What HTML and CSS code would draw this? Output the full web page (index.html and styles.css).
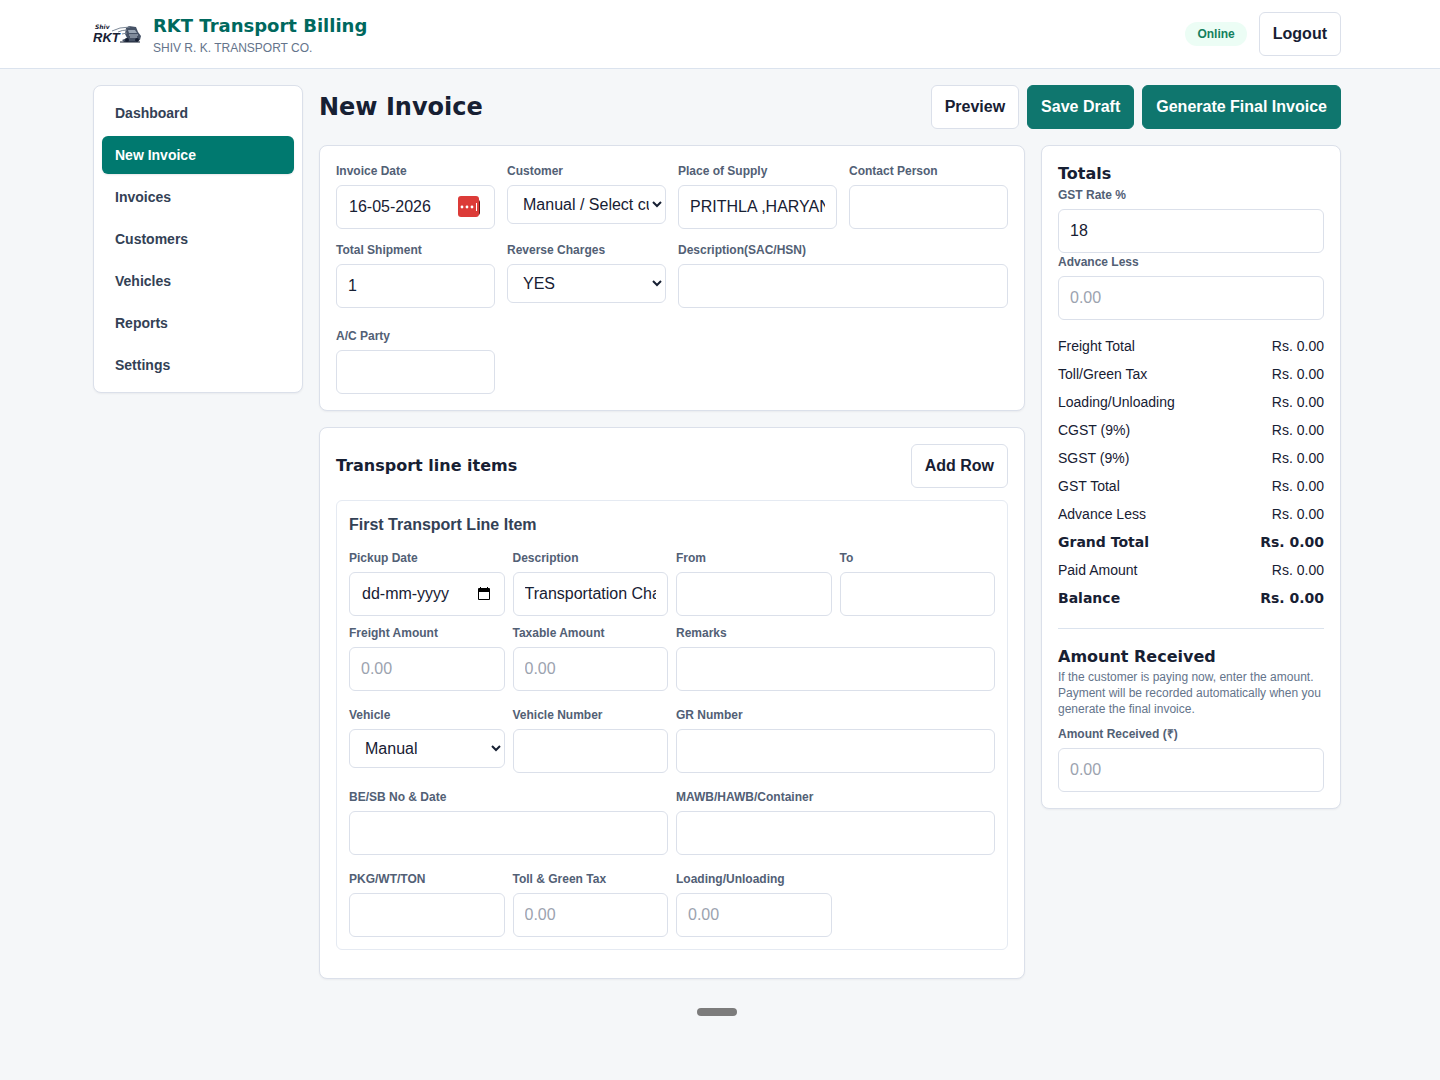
FILE: index.html
```html
<!DOCTYPE html>
<html lang="en">
<head>
<title>RKT Transport Billing</title>
<meta charset="utf-8">
<meta name="viewport" content="width=device-width, initial-scale=1">
<link rel="stylesheet" href="styles.css">
</head>
<body>
<header class="topbar">
	<div class="container topbar-inner">
		<div class="brand">
			<svg class="logo" viewBox="0 0 48 20" role="img" aria-label="Shiv RKT">
				<text class="logo-small" x="2" y="5">Shiv</text>
				<text class="logo-big" x="0" y="18">RKT</text>
				<path d="M33 4 L36 2 L43 3 L45 8 L48 12 L47 16 L42 18 L31 18 L29 16 L34 14 L32 10 Z" fill="#465266"/>
				<path d="M35 6 L42 6 L44 9 L36 9 Z" fill="#9aa6b5"/>
				<path d="M19 7 Q26 3 37 3 M25 8 Q29 6 34 6 M29 10 L34 9" stroke="#7d8998" stroke-width="1" fill="none"/>
				<path d="M36 11 H45 M37 13 H44" stroke="#b9c3cf" stroke-width="1"/>
				<path d="M27 18 H47" stroke="#172033" stroke-width="1"/>
				<circle cx="34" cy="16" r="2" fill="#172033"/>
				<circle cx="44" cy="16" r="2" fill="#172033"/>
			</svg>
			<div>
				<div class="brand-name">RKT Transport Billing</div>
				<div class="brand-sub">SHIV R. K. TRANSPORT CO.</div>
			</div>
		</div>
		<div class="account">
			<span class="status">Online</span>
			<button type="button" class="btn">Logout</button>
		</div>
	</div>
</header>
<div class="page">
	<div class="container layout">
		<nav class="sidebar">
			<a href="#dashboard">Dashboard</a>
			<a href="#new" class="active">New Invoice</a>
			<a href="#invoices">Invoices</a>
			<a href="#customers">Customers</a>
			<a href="#vehicles">Vehicles</a>
			<a href="#reports">Reports</a>
			<a href="#settings">Settings</a>
		</nav>
		<main>
			<div class="title-row">
				<h1>New Invoice</h1>
				<div class="actions">
					<button type="button" class="btn">Preview</button>
					<button type="button" class="btn btn-primary">Save Draft</button>
					<button type="button" class="btn btn-primary">Generate Final Invoice</button>
				</div>
			</div>
			<form class="columns">
				<div class="stack">
					<section class="card grid">
						<div class="field">
							<label for="invoiceDate">Invoice Date</label>
							<div class="date">
								<input id="invoiceDate" type="text" value="16-05-2026">
								<svg class="fill-icon" viewBox="0 0 23 22" aria-hidden="true">
									<path d="M19 4 h1 q2 0 2 2 v11 q0 2 -2 2 h-1z" fill="#5f1d1b"/>
									<rect x="0" y="0" width="21" height="21" rx="3" fill="#dc3b38"/>
									<circle cx="4" cy="11" r="1.4" fill="#fff"/>
									<circle cx="9" cy="11" r="1.4" fill="#fff"/>
									<circle cx="14" cy="11" r="1.4" fill="#fff"/>
									<rect x="18" y="7" width="1" height="8" fill="#fff"/>
								</svg>
							</div>
						</div>
						<div class="field">
							<label for="customer">Customer</label>
							<select id="customer"><option>Manual / Select customer</option></select>
						</div>
						<div class="field">
							<label for="place">Place of Supply</label>
							<input id="place" type="text" value="PRITHLA ,HARYANA">
						</div>
						<div class="field">
							<label for="contact">Contact Person</label>
							<input id="contact" type="text">
						</div>
						<div class="field">
							<label for="shipment">Total Shipment</label>
							<input id="shipment" type="text" value="1">
						</div>
						<div class="field">
							<label for="reverse">Reverse Charges</label>
							<select id="reverse"><option>YES</option><option>NO</option></select>
						</div>
						<div class="field wide">
							<label for="sac">Description(SAC/HSN)</label>
							<textarea id="sac" rows="1"></textarea>
						</div>
						<div class="field">
							<label for="party">A/C Party</label>
							<input id="party" type="text">
						</div>
					</section>

					<section class="card">
						<div class="card-head">
							<h2>Transport line items</h2>
							<button type="button" class="btn">Add Row</button>
						</div>
						<div class="item">
							<h3>First Transport Line Item</h3>
							<div class="grid tight">
								<div class="field">
									<label for="pickup">Pickup Date</label>
									<div class="date">
										<input id="pickup" class="empty-date" type="text" placeholder="dd-mm-yyyy">
										<svg class="calendar" viewBox="0 0 14 14" aria-hidden="true">
											<path d="M2 1 H12 Q13 1 13 2 V12 Q13 13 12 13 H2 Q1 13 1 12 V2 Q1 1 2 1 Z M2 5 V12 H12 V5 Z" fill="#000" fill-rule="evenodd"/>
											<path d="M3 0 h1 v2 h-1z M10 0 h1 v2 h-1z" fill="#000"/>
										</svg>
									</div>
								</div>
								<div class="field">
									<label for="desc">Description</label>
									<input id="desc" type="text" value="Transportation Charges">
								</div>
								<div class="field">
									<label for="from">From</label>
									<input id="from" type="text">
								</div>
								<div class="field">
									<label for="to">To</label>
									<input id="to" type="text">
								</div>
								<div class="field">
									<label for="freight">Freight Amount</label>
									<input id="freight" type="text" placeholder="0.00">
								</div>
								<div class="field">
									<label for="taxable">Taxable Amount</label>
									<input id="taxable" type="text" placeholder="0.00">
								</div>
								<div class="field wide">
									<label for="remarks">Remarks</label>
									<textarea id="remarks" rows="1"></textarea>
								</div>
								<div class="field">
									<label for="vehicle">Vehicle</label>
									<select id="vehicle"><option>Manual</option></select>
								</div>
								<div class="field">
									<label for="vehicleNo">Vehicle Number</label>
									<input id="vehicleNo" type="text">
								</div>
								<div class="field wide">
									<label for="gr">GR Number</label>
									<textarea id="gr" rows="1"></textarea>
								</div>
								<div class="field wide">
									<label for="be">BE/SB No &amp; Date</label>
									<textarea id="be" rows="1"></textarea>
								</div>
								<div class="field wide">
									<label for="mawb">MAWB/HAWB/Container</label>
									<textarea id="mawb" rows="1"></textarea>
								</div>
								<div class="field">
									<label for="pkg">PKG/WT/TON</label>
									<input id="pkg" type="text">
								</div>
								<div class="field">
									<label for="toll">Toll &amp; Green Tax</label>
									<input id="toll" type="text" placeholder="0.00">
								</div>
								<div class="field">
									<label for="loading">Loading/Unloading</label>
									<input id="loading" type="text" placeholder="0.00">
								</div>
							</div>
						</div>
					</section>
				</div>

				<aside class="card">
					<h2>Totals</h2>
					<div class="field">
						<label for="gst">GST Rate %</label>
						<input id="gst" type="text" value="18">
					</div>
					<div class="field">
						<label for="advance">Advance Less</label>
						<input id="advance" type="text" placeholder="0.00">
					</div>
					<dl class="totals">
						<div><dt>Freight Total</dt><dd>Rs. 0.00</dd></div>
						<div><dt>Toll/Green Tax</dt><dd>Rs. 0.00</dd></div>
						<div><dt>Loading/Unloading</dt><dd>Rs. 0.00</dd></div>
						<div><dt>CGST (9%)</dt><dd>Rs. 0.00</dd></div>
						<div><dt>SGST (9%)</dt><dd>Rs. 0.00</dd></div>
						<div><dt>GST Total</dt><dd>Rs. 0.00</dd></div>
						<div><dt>Advance Less</dt><dd>Rs. 0.00</dd></div>
						<div class="strong"><dt>Grand Total</dt><dd>Rs. 0.00</dd></div>
						<div><dt>Paid Amount</dt><dd>Rs. 0.00</dd></div>
						<div class="strong"><dt>Balance</dt><dd>Rs. 0.00</dd></div>
					</dl>
					<div class="received">
						<h2>Amount Received</h2>
						<p>If the customer is paying now, enter the amount. Payment will be recorded automatically when you generate the final invoice.</p>
						<div class="field">
							<label for="received">Amount Received (₹)</label>
							<input id="received" type="text" placeholder="0.00">
						</div>
					</div>
				</aside>
			</form>
		</main>
	</div>
	<div class="handle"></div>
</div>
</body>
</html>
```
FILE: styles.css
```css
* {
	box-sizing: border-box;
}
body {
	margin: 0;
	background: #f5f7f9;
	color: #172033;
	font-family: "Liberation Sans", Arial, sans-serif;
	font-size: 16px;
	line-height: 24px;
}
h1, h2, h3, p, dl, dd {
	margin: 0;
}
h1, h2, .brand-name, .strong {
	font-family: "DejaVu Sans", sans-serif;
	font-weight: bold;
}
h1 {
	font-size: 24px;
	line-height: 32px;
}
h2 {
	font-size: 16px;
}
h3 {
	margin-bottom: 12px;
	font-size: 16px;
	color: #334155;
}
/* same gutter on both, keeps header and content lined up */
.topbar, .page {
	padding-right: 6px;
}
.container {
	max-width: 1280px;
	margin: 0 auto;
	padding: 0 16px;
}
.topbar {
	background: #fff;
	border-bottom: 1px solid #dbe3ee;
}
.topbar-inner {
	display: flex;
	align-items: center;
	justify-content: space-between;
	padding-top: 12px;
	padding-bottom: 12px;
}
.brand, .account {
	display: flex;
	align-items: center;
	gap: 12px;
}
.logo {
	width: 48px;
	height: 20px;
}
.logo text {
	font-weight: bold;
	font-style: italic;
	fill: #172033;
}
.logo .logo-small {
	font-family: "DejaVu Sans", sans-serif;
	font-size: 6px;
}
.logo .logo-big {
	font-size: 13px;
}
.brand-name {
	font-size: 18px;
	line-height: 28px;
	color: #00685e;
}
.brand-sub {
	font-size: 12px;
	line-height: 16px;
	color: #64748b;
}
.status {
	padding: 4px 12px;
	border-radius: 12px;
	background: #ecfdf5;
	color: #14805e;
	font-size: 12px;
	font-weight: bold;
	line-height: 16px;
}
.btn {
	height: 44px;
	padding: 0 13px;
	border: 1px solid #dbe0ea;
	border-radius: 6px;
	background: #fff;
	color: #172033;
	font-family: inherit;
	font-size: 16px;
	font-weight: bold;
}
.btn-primary {
	border-color: #0f766e;
	background: #0f766e;
	color: #fff;
}
.layout {
	display: grid;
	grid-template-columns: 210px minmax(0, 1fr);
	align-items: start;
	gap: 16px;
	padding-top: 16px;
}
.sidebar, .card {
	border: 1px solid #dbe0ea;
	border-radius: 8px;
	background: #fff;
	box-shadow: 0 1px 2px rgba(15, 23, 42, .05);
}
.sidebar {
	display: grid;
	gap: 4px;
	padding: 8px;
}
.sidebar a {
	padding: 9px 13px;
	border-radius: 6px;
	color: #334155;
	font-size: 14px;
	font-weight: bold;
	line-height: 20px;
	text-decoration: none;
}
.sidebar .active {
	background: #00796f;
	color: #fff;
	box-shadow: 0 1px 2px rgba(15, 23, 42, .1);
}
.title-row, .card-head {
	display: flex;
	align-items: center;
	justify-content: space-between;
}
.title-row {
	margin-bottom: 16px;
}
.actions {
	display: flex;
	gap: 8px;
}
.columns {
	display: grid;
	grid-template-columns: minmax(0, 1fr) 300px;
	align-items: start;
	gap: 16px;
}
.stack {
	display: grid;
	gap: 16px;
}
.card {
	padding: 16px;
}
.card-head {
	margin-bottom: 12px;
}
.grid {
	display: grid;
	grid-template-columns: repeat(4, minmax(0, 1fr));
	align-items: start;
	gap: 12px;
}
.grid.tight {
	gap: 8px;
}
.wide {
	grid-column: span 2;
}
.item {
	margin-bottom: 12px;
	padding: 12px;
	border: 1px solid #e5eaf2;
	border-radius: 6px;
}
.field label {
	display: block;
	margin-bottom: 5px;
	color: #526075;
	font-size: 12px;
	font-weight: bold;
	line-height: 18px;
}
input, select, textarea {
	display: block;
	width: 100%;
	height: 44px;
	padding: 0 11px;
	border: 1px solid #dbe0ea;
	border-radius: 6px;
	background: #fff;
	color: #172033;
	font-family: inherit;
	font-size: 16px;
}
select {
	height: 39px;
	padding-right: 0;
}
textarea {
	margin-bottom: 7px;
	padding: 9px 11px;
	line-height: 24px;
	resize: none;
}
::placeholder {
	color: #9ca3af;
}
.empty-date::placeholder {
	color: #172033;
}
.date {
	position: relative;
}
.date input {
	padding-left: 12px;
}
.calendar, .fill-icon {
	position: absolute;
}
.calendar {
	top: 15px;
	right: 14px;
	width: 14px;
	height: 14px;
}
.fill-icon {
	top: 11px;
	right: 14px;
	width: 23px;
	height: 22px;
}
.totals {
	padding: 12px 0 16px;
	border-bottom: 1px solid #dbe3ee;
	font-size: 14px;
	line-height: 20px;
}
.totals div {
	display: flex;
	justify-content: space-between;
	padding: 4px 0;
}
.received {
	padding-top: 16px;
}
.received p {
	margin-bottom: 8px;
	color: #64748b;
	font-size: 12px;
	line-height: 16px;
}
.handle {
	width: 40px;
	height: 8px;
	margin: 29px auto;
	border-radius: 4px;
	background: #7c7c7c;
}
@media (max-width: 900px) {
	.layout, .columns {
		grid-template-columns: minmax(0, 1fr);
	}
	.grid {
		grid-template-columns: repeat(2, minmax(0, 1fr));
	}
}
```
